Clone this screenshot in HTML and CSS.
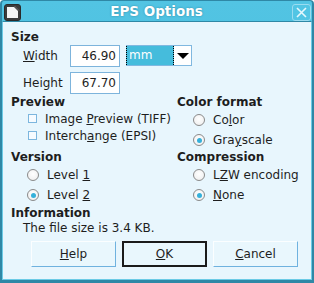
FILE: index.html
```html
<!DOCTYPE html>
<html lang="en">
<head>
  <meta charset="UTF-8">
  <title>EPS Options</title>
  <link rel="stylesheet" href="styles.css">
</head>
<body>
  <div class="window">
    <div class="titlebar">
      <svg class="app-icon" width="17" height="17" viewBox="0 0 17 17">
        <rect x="0.5" y="0.5" width="16" height="16" rx="2.5" fill="#3b3b3b" stroke="#2a2a2a"/>
        <path d="M3 3 H10 L14 7 V14 H3 Z" fill="#f4f4f4"/>
        <path d="M10.5 2 L15 6.5" stroke="#6a6a6a" stroke-width="1"/>
      </svg>
      <div class="title">EPS Options</div>
      <div class="close">
        <svg width="11" height="11" viewBox="0 0 11 11">
          <path d="M1 1 L10 10 M10 1 L1 10" stroke="#e6f8fd" stroke-width="1.6"/>
        </svg>
      </div>
    </div>

    <div class="content">
      <div class="heading">Size</div>
      <div class="field-row">
        <span class="field-label"><u>W</u>idth</span>
        <input class="num" value="46.90">
        <div class="combo">
          <span class="combo-value">mm</span>
          <span class="combo-arrow"></span>
        </div>
      </div>
      <div class="field-row second">
        <span class="field-label">Height</span>
        <input class="num" value="67.70">
      </div>

      <div class="columns">
        <div class="col">
          <div class="heading">Preview</div>
          <div class="check-row"><span class="checkbox"></span><span>Image <u>P</u>review (TIFF)</span></div>
          <div class="check-row"><span class="checkbox"></span><span>Interch<u>a</u>nge (EPSI)</span></div>
        </div>
        <div class="col">
          <div class="heading">Color format</div>
          <div class="radio-row"><span class="radio"></span><span>Co<u>l</u>or</span></div>
          <div class="radio-row"><span class="radio checked"></span><span>Gra<u>y</u>scale</span></div>
        </div>
        <div class="col">
          <div class="heading">Version</div>
          <div class="radio-row"><span class="radio"></span><span>Level <u>1</u></span></div>
          <div class="radio-row"><span class="radio checked"></span><span>Level <u>2</u></span></div>
        </div>
        <div class="col">
          <div class="heading">Compression</div>
          <div class="radio-row"><span class="radio"></span><span>L<u>Z</u>W encoding</span></div>
          <div class="radio-row"><span class="radio checked"></span><span><u>N</u>one</span></div>
        </div>
      </div>

      <div class="heading info-heading">Information</div>
      <div class="info-text">The file size is 3.4 KB.</div>

      <div class="buttons">
        <button class="btn"><u>H</u>elp</button>
        <button class="btn default"><u>O</u>K</button>
        <button class="btn"><u>C</u>ancel</button>
      </div>
    </div>
  </div>
</body>
</html>
```

FILE: styles.css
```css
body {
  margin: 0;
  font-family: 'DejaVu Sans', sans-serif;
  font-size: 12px;
  color: #1e1e1e;
}

.window {
  width: 314px;
  height: 283px;
  box-sizing: border-box;
  display: flex;
  flex-direction: column;
  background: linear-gradient(#52c4e3, #42b9da);
  border: 2px solid #2f88a6;
  border-top-width: 1px;
  border-bottom-width: 3px;
  border-radius: 4px 4px 0 0;
}

.titlebar {
  height: 20px;
  display: flex;
  align-items: center;
}

.app-icon {
  margin-left: 2px;
  margin-top: 2px;
}

.title {
  flex: 1;
  text-align: center;
  color: #fff;
  font-weight: bold;
  font-size: 13.5px;
  line-height: 20px;
  text-shadow: 0 0 2px rgba(20, 90, 115, 0.6);
}

.close {
  width: 19px;
  height: 17px;
  box-sizing: border-box;
  margin-right: 1px;
  margin-top: 2px;
  border: 1px solid #9adcf0;
  border-radius: 3px;
  background: #52c5e4;
  display: flex;
  align-items: center;
  justify-content: center;
}

.content {
  flex: 1;
  background: #e8f6fd;
  border-top: 1px solid #2f88a6;
  border-left: 1px solid #6ccbe6;
  border-right: 1px solid #6ccbe6;
  border-bottom: 1px solid #6ccbe6;
  padding: 8px 0 0 8px;
}

.heading {
  font-weight: bold;
  line-height: 15px;
}

.field-row {
  display: flex;
  align-items: center;
  height: 22px;
  padding-left: 12px;
}

.field-row.second {
  margin-top: 5px;
}

.field-label {
  width: 47px;
}

.num {
  width: 50px;
  height: 22px;
  box-sizing: border-box;
  border: 1px solid #7db4dc;
  background: #fff;
  padding: 0 3px 0 0;
  text-align: right;
  font-family: 'DejaVu Sans', sans-serif;
  font-size: 12px;
  color: #1e1e1e;
}

.combo {
  width: 66px;
  height: 21px;
  box-sizing: border-box;
  margin-left: 6px;
  margin-top: -1px;
  border: 1px solid #80b8e0;
  background: #fff;
  display: flex;
}

.combo-value {
  width: 44px;
  margin-left: -1px;
  background: #45bcdc;
  color: #fff;
  padding-left: 2px;
  line-height: 19px;
  border-left: 1px dotted #000;
  border-right: 1px dotted #000;
}

.combo-arrow {
  flex: 1;
  display: flex;
  align-items: center;
  justify-content: center;
}

.combo-arrow::after {
  content: "";
  border-left: 6px solid transparent;
  border-right: 6px solid transparent;
  border-top: 6px solid #000;
}

.columns {
  display: grid;
  grid-template-columns: 166px 1fr;
  margin-top: 1px;
}

.check-row {
  display: flex;
  align-items: center;
  height: 17px;
}

.checkbox {
  width: 9px;
  height: 9px;
  box-sizing: border-box;
  margin: 0 8px 0 17px;
  border: 1px solid #7cb6de;
  background: #f6fbff;
}

.radio-row {
  display: flex;
  align-items: center;
  height: 20px;
}

.radio {
  width: 12px;
  height: 12px;
  box-sizing: border-box;
  margin: 0 8px 0 16px;
  border: 1px solid #8a8a8a;
  border-radius: 50%;
  background: radial-gradient(circle at 50% 40%, #ffffff, #ececec);
  display: flex;
  align-items: center;
  justify-content: center;
}

.radio.checked::after {
  content: "";
  width: 5px;
  height: 5px;
  border-radius: 50%;
  background: #36b0da;
}

.info-heading {
  margin-top: 1px;
}

.info-text {
  padding-left: 12px;
  line-height: 15px;
}

.buttons {
  display: flex;
  gap: 6px;
  margin: 5px 0 0 20px;
}

.btn {
  width: 85px;
  height: 26px;
  box-sizing: border-box;
  background: #e9f7fd;
  border: 1px solid;
  border-color: #fbfeff #6fb2df #6fb2df #fbfeff;
  font-family: 'DejaVu Sans', sans-serif;
  font-size: 12px;
  color: #1e1e1e;
  padding: 0;
}

.btn.default {
  border: 2px solid #1b1b1b;
}
```
